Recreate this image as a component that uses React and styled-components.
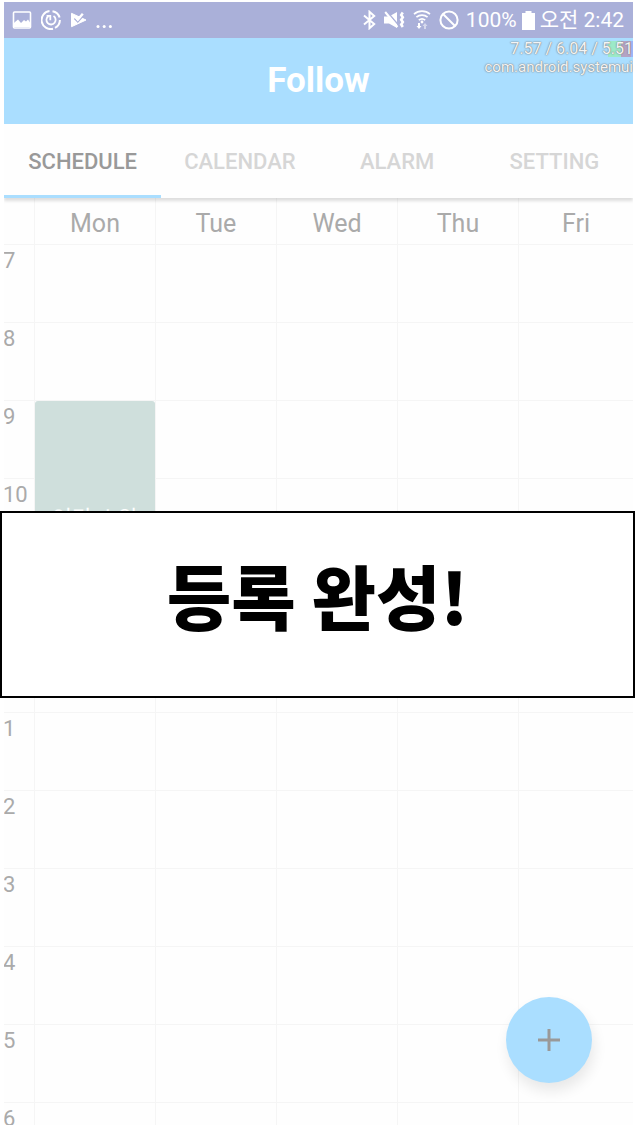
import React from "react";
import styled, { createGlobalStyle } from "styled-components";

const Global = createGlobalStyle`
  * { box-sizing: border-box; }
  body {
    margin: 0;
    background: #fff;
    font-family: Roboto, "Noto Sans CJK KR", sans-serif;
  }
  #root { overflow: hidden; }
`;

const Page = styled.div`
  position: relative;
  padding: 2px 2px 2px 4px;
`;

const Screen = styled.div`
  position: relative;
  overflow: hidden;
  height: calc(100vh - 4px);
  background: #fefefe;
`;

const StatusBar = styled.div`
  display: flex;
  align-items: center;
  justify-content: space-between;
  height: 36px;
  padding: 0 9px 0 8px;
  background: #aab0d9;
  color: #fff;
`;

const StatusGroup = styled.div`
  display: flex;
  align-items: center;
  gap: ${(p) => p.$gap}px;
`;

const StatusText = styled.span`
  font-size: 21px;
  line-height: 36px;
  white-space: nowrap;
`;

const KoreanText = styled.span`
  font-family: "Noto Sans CJK KR", sans-serif;
  font-weight: 400;
  line-height: 1;
`;

const Header = styled.header`
  display: flex;
  align-items: center;
  justify-content: center;
  height: 86px;
  background: #aadeff;
`;

const Title = styled.h1`
  margin: 0;
  color: #fff;
  font-size: 35px;
  line-height: 42px;
  font-weight: 700;
`;

const Monitor = styled.div`
  position: absolute;
  top: 38px;
  right: 0;
  color: #f4f4f4;
  text-align: right;
  text-shadow: 0 0 1px #777, 0 0 2px #888;
`;

const MonitorLine = styled.div`
  font-size: ${(p) => p.$size}px;
  line-height: 18px;
`;

const Load = styled.span`
  display: inline-block;
  line-height: 16px;
  background: linear-gradient(90deg, transparent 20%, #9ceac8 20% 60%, #b4a3c4 60% 93%, #9cb4f8 93%);
`;

const Tabs = styled.nav`
  position: relative;
  display: grid;
  grid-template-columns: repeat(4, 1fr);
  height: 74px;
  background: #fefefe;
  box-shadow: 0 3px 3px rgba(0, 0, 0, 0.13);
`;

const Tab = styled.button`
  padding: 4px 0 0;
  border: 0;
  border-bottom: 3px solid ${(p) => (p.$active ? "#aadeff" : "transparent")};
  background: none;
  color: ${(p) => (p.$active ? "#999" : "#d6d6d6")};
  font-family: inherit;
  font-size: 22px;
  font-weight: 500;
`;

const Timetable = styled.table`
  width: 100%;
  table-layout: fixed;
  border-collapse: separate;
  border-spacing: 0;
  color: #aaa;
`;

const TimeCol = styled.col`
  width: 30px;
`;

const DayCol = styled.col`
  width: ${(p) => p.$share}%;
`;

const Day = styled.th`
  height: 46px;
  padding: 5px 0 0;
  border-left: 1px solid #f5f5f5;
  font-size: 25px;
  line-height: 30px;
  font-weight: 400;
`;

const Hour = styled.th`
  height: 78px;
  padding: 4px 0 0;
  border-top: 1px solid #f5f5f5;
  font-size: 22px;
  line-height: 24px;
  font-weight: 400;
  text-align: left;
  text-indent: -1px;
  vertical-align: top;
`;

const Slot = styled.td`
  height: 78px;
  padding: 0;
  border-top: 1px solid #f5f5f5;
  border-left: 1px solid #f5f5f5;
  vertical-align: top;
`;

const Lesson = styled.div`
  display: flex;
  align-items: center;
  justify-content: center;
  height: 232px;
  padding-top: 4px;
  border-radius: 3px;
  background: #cfdfdc;
  color: #fff;
  font-size: 22px;
  line-height: 28px;
`;

const AddButton = styled.button`
  position: absolute;
  right: 41px;
  bottom: 42px;
  display: grid;
  place-items: center;
  width: 86px;
  height: 86px;
  padding: 0;
  border: 0;
  border-radius: 50%;
  background: #aadeff;
  box-shadow: 2px 8px 14px rgba(0, 0, 0, 0.09);
`;

const Dialog = styled.section`
  position: absolute;
  top: 511px;
  left: 0;
  right: 0;
  display: flex;
  align-items: center;
  justify-content: center;
  height: 187px;
  padding-bottom: 20px;
  border: 2px solid #000;
  background: #fff;
`;

const Message = styled.p`
  margin: 0;
  color: #000;
  font-family: "Noto Sans CJK KR", sans-serif;
  font-size: 70px;
  line-height: 80px;
  font-weight: 900;
  white-space: nowrap;
`;

const line = { fill: "none", stroke: "currentColor", strokeWidth: 2 };

const PictureIcon = () => (
  <svg width="20" height="20" viewBox="0 0 20 20" aria-hidden="true">
    <rect x="1.5" y="2" width="17" height="16" rx="1" fill="none" stroke="currentColor" strokeWidth="1.6" />
    <path d="M2 17v-4l1-1 3-2.5L9 13l3-3 2 1.5L16 9.5l2 3V17z" fill="currentColor" />
  </svg>
);

const PowerIcon = () => (
  <svg width="20" height="20" viewBox="0 0 20 20" aria-hidden="true">
    <path d="M11.5 1.2A9 9 0 0 1 18.6 7.5M18.9 10A9 9 0 0 1 14 17.9M12 18.7A9 9 0 1 1 8.5 1.1" {...line} />
    <path d="M12.5 6a4.6 4.6 0 1 1-5.2.2M5.6 5.8h3.7v4.4" {...line} strokeWidth="1.8" />
  </svg>
);

const PlayCheckIcon = () => (
  <svg width="17" height="18" viewBox="0 0 17 18" aria-hidden="true">
    <path d="M1.5 2.3v13.4L16 9z" fill="currentColor" stroke="currentColor" strokeLinejoin="round" />
    <path d="m4.4 7.4 3.4 3.6L14.5 3.6" fill="none" stroke="#aab0d9" strokeWidth="1.4" />
    <path d="M5 5.2 7.8 8.6 12.8 2.8" {...line} strokeWidth="2.4" />
  </svg>
);

const DotsIcon = () => (
  <svg width="17" height="20" viewBox="0 0 17 20" fill="currentColor" aria-hidden="true">
    <circle cx="2" cy="16.5" r="1.5" />
    <circle cx="8.2" cy="16.5" r="1.5" />
    <circle cx="14.4" cy="16.5" r="1.5" />
  </svg>
);

const BluetoothIcon = () => (
  <svg width="13" height="20" viewBox="0 0 13 20" aria-hidden="true">
    <path d="M1 5.5 11.2 14 6.5 18.2V1.8L11.2 6 1 14.5" {...line} />
  </svg>
);

const MuteIcon = () => (
  <svg width="21" height="20" viewBox="0 0 21 20" aria-hidden="true">
    <path d="M0 6.5h5L13 2v16l-8-4.5H0z" fill="currentColor" />
    <path d="M2.5 1 14 14.5" stroke="#aab0d9" strokeWidth="1.4" />
    <path d="M1.2 2 13.5 17" stroke="currentColor" strokeWidth="2" />
    <path d="m18.8 2.5-1.6 2.4 1.6 2.4-1.6 2.4 1.6 2.4-1.6 2.4 1.6 2.5" {...line} strokeWidth="2.6" />
  </svg>
);

const WifiIcon = () => (
  <svg width="18" height="20" viewBox="0 0 18 20" aria-hidden="true">
    <path d="M1 4.2a12 12 0 0 1 16 0M3.4 7.2a8.5 8.5 0 0 1 11.2 0M5.8 10.2a5 5 0 0 1 6.4 0" {...line} strokeWidth="1.7" />
    <circle cx="9" cy="12" r="1.4" fill="currentColor" />
    <path d="M5 13h2v3h1.5L6 19l-2.5-3H5z" fill="currentColor" />
    <path d="M11 19h2v-3h1.5L12 13l-2.5 3H11z" fill="currentColor" opacity=".5" />
  </svg>
);

const BlockedIcon = () => (
  <svg width="20" height="20" viewBox="0 0 20 20" aria-hidden="true">
    <circle cx="10" cy="10" r="8.6" {...line} />
    <path d="m4 4 12 12" {...line} />
  </svg>
);

const BatteryIcon = () => (
  <svg width="13" height="19" viewBox="0 0 13 19" fill="currentColor" aria-hidden="true">
    <path d="M3.5 0h6v2H13v17H0V2h3.5z" />
  </svg>
);

const PlusIcon = () => (
  <svg width="22" height="22" viewBox="0 0 22 22" aria-hidden="true">
    <path d="M11 0v22M0 11h22" stroke="#999" strokeWidth="3" />
  </svg>
);

const tabs = ["SCHEDULE", "CALENDAR", "ALARM", "SETTING"];
const days = ["Mon", "Tue", "Wed", "Thu", "Fri"];
const hours = [7, 8, 9, 10, 11, 12, 1, 2, 3, 4, 5, 6];
const lesson = { day: "Mon", start: 9, span: 3, name: "인간 소양" };

function HourRow({ hour, index }) {
  const first = hours.indexOf(lesson.start);
  return (
    <tr>
      <Hour scope="row">{hour}</Hour>
      {days.map((day) => {
        if (day !== lesson.day || index < first || index >= first + lesson.span) {
          return <Slot key={day} />;
        }
        return index === first ? (
          <Slot key={day} rowSpan={lesson.span}>
            <Lesson>{lesson.name}</Lesson>
          </Slot>
        ) : null;
      })}
    </tr>
  );
}

export default function App() {
  return (
    <>
      <Global />
      <Page>
        <Screen>
          <StatusBar>
            <StatusGroup $gap={9}>
              <PictureIcon />
              <PowerIcon />
              <PlayCheckIcon />
              <DotsIcon />
            </StatusGroup>
            <StatusGroup $gap={7}>
              <StatusGroup $gap={8}>
                <BluetoothIcon />
                <MuteIcon />
                <WifiIcon />
                <BlockedIcon />
              </StatusGroup>
              <StatusGroup $gap={5}>
                <StatusText>100%</StatusText>
                <BatteryIcon />
                <StatusText>
                  <KoreanText>오전</KoreanText> 2:42
                </StatusText>
              </StatusGroup>
            </StatusGroup>
          </StatusBar>
          <Header>
            <Title>Follow</Title>
          </Header>
          <Monitor>
            <MonitorLine $size={16}>
              7.57 / 6.04 / <Load>5.51</Load>
            </MonitorLine>
            <MonitorLine $size={15}>com.android.systemui</MonitorLine>
          </Monitor>
          <Tabs>
            {tabs.map((name, i) => (
              <Tab key={name} type="button" $active={i === 0}>
                {name}
              </Tab>
            ))}
          </Tabs>
          <Timetable>
            <colgroup>
              <TimeCol />
              {days.map((day) => (
                <DayCol key={day} $share={day === "Fri" ? 18.3 : 19.25} />
              ))}
            </colgroup>
            <thead>
              <tr>
                <td />
                {days.map((day) => (
                  <Day key={day} scope="col">{day}</Day>
                ))}
              </tr>
            </thead>
            <tbody>
              {hours.map((hour, i) => (
                <HourRow key={hour} hour={hour} index={i} />
              ))}
            </tbody>
          </Timetable>
          <AddButton type="button" aria-label="Add">
            <PlusIcon />
          </AddButton>
        </Screen>
        <Dialog role="dialog" aria-labelledby="message">
          <Message id="message">등록 완성!</Message>
        </Dialog>
      </Page>
    </>
  );
}
